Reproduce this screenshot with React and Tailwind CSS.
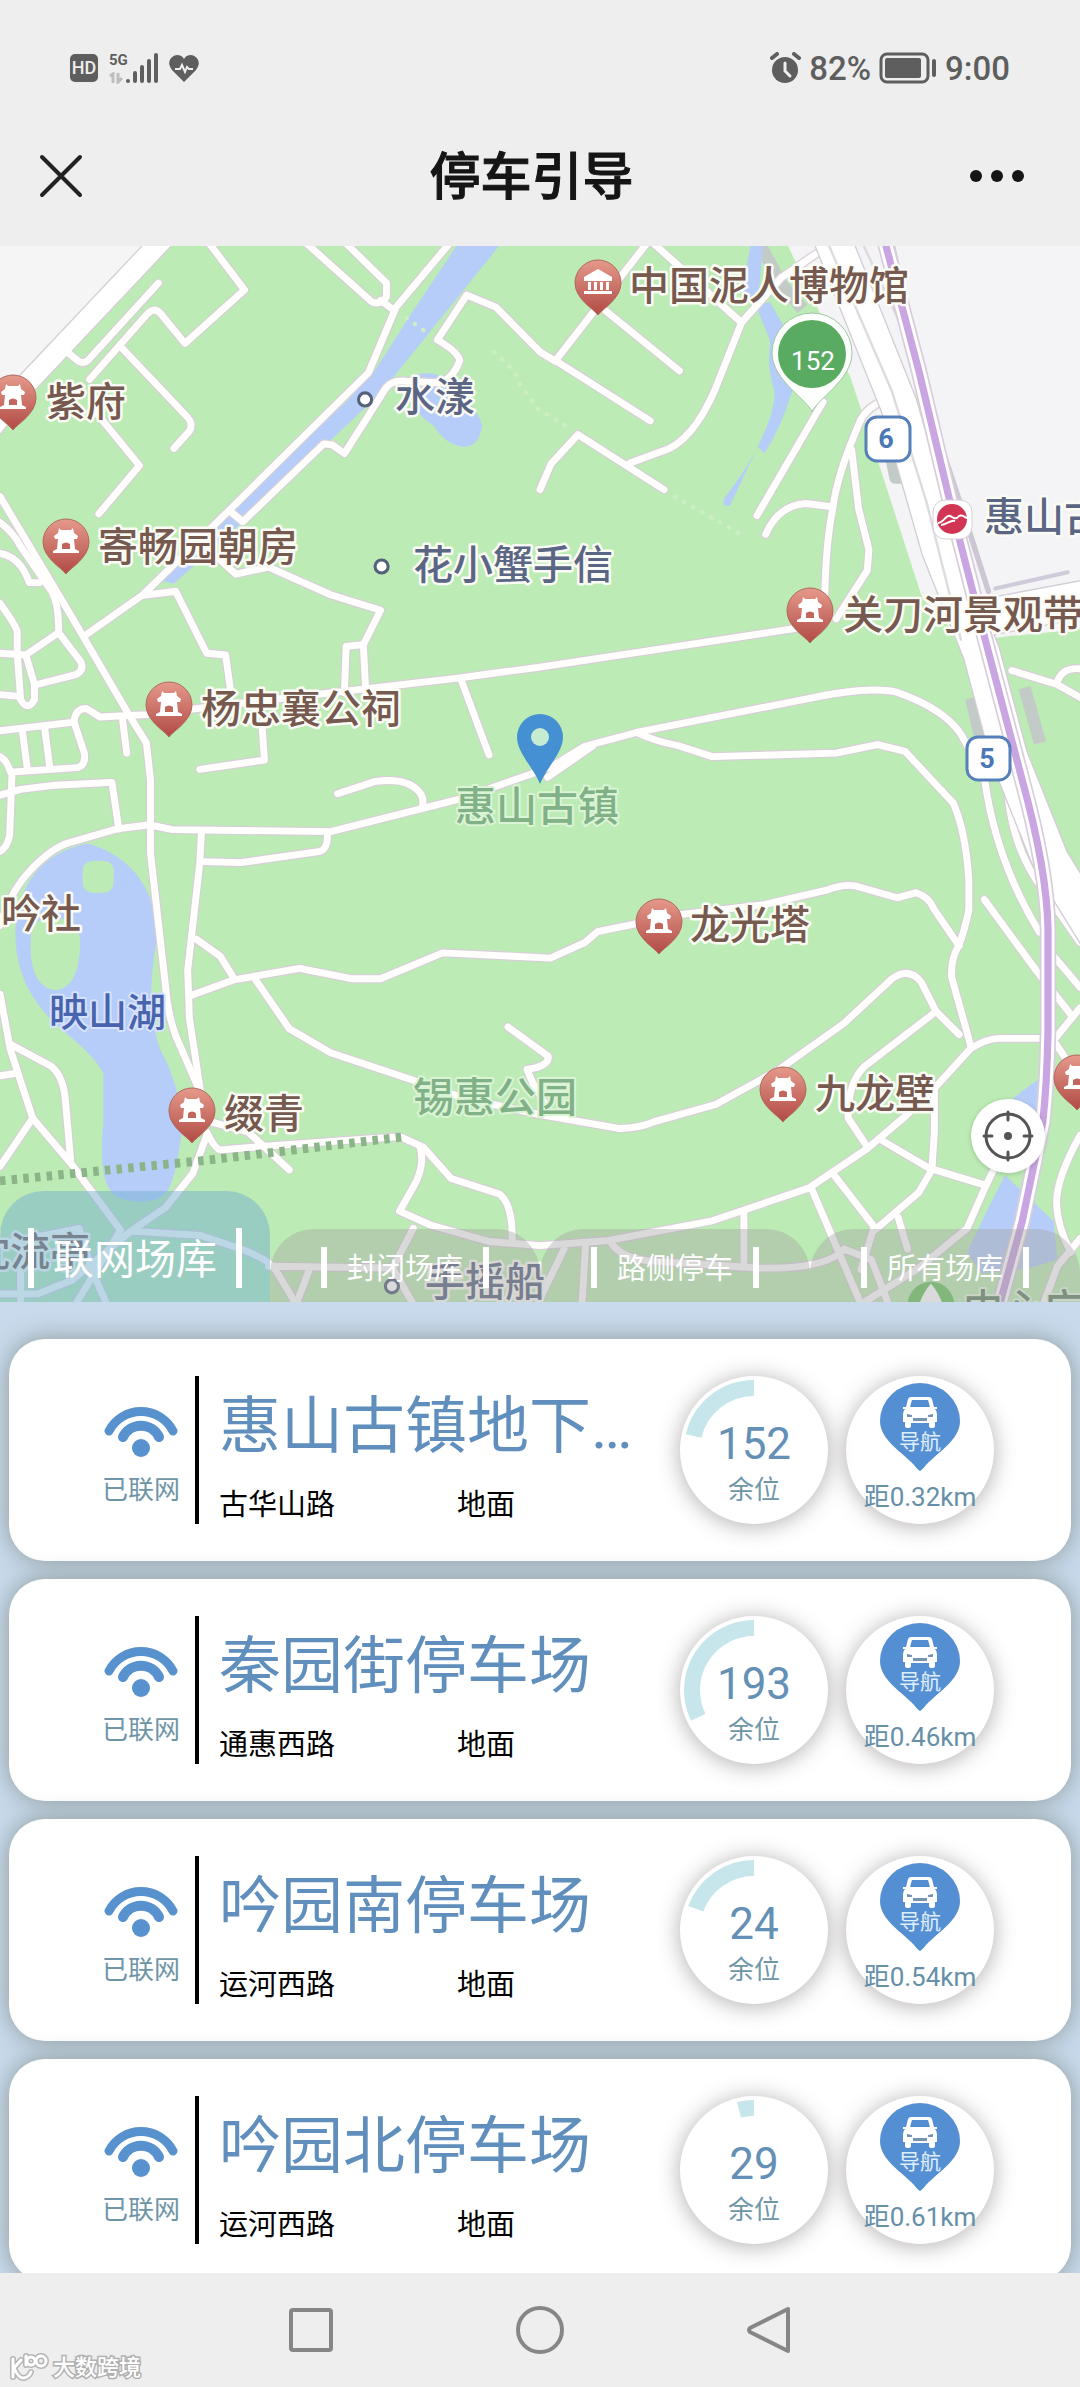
import React from "react";

const lots = [
  { name: "惠山古镇地下…", road: "古华山路", level: "地面", free: 152, distance: "0.32", used: 77 },
  { name: "秦园街停车场", road: "通惠西路", level: "地面", free: 193, distance: "0.46", used: 116 },
  { name: "吟园南停车场", road: "运河西路", level: "地面", free: 24, distance: "0.54", used: 70 },
  { name: "吟园北停车场", road: "运河西路", level: "地面", free: 29, distance: "0.61", used: 14 },
];

const roads = [
  "M600 0L710 145L537 300L465 212Q450 195 430 212L260 405",
  "M460 125L255 350Q240 362 225 350L195 325",
  "M355 315L545 515Q562 535 550 555L505 605",
  "M270 490L405 655L287 795",
  "M0 745L200 1080L375 1380L425 1460L437 1568V1780L480 2160Q485 2240 510 2310L575 2460",
  "M1305 10L1150 195L1070 385L660 790L415 1030L245 1150",
  "M665 785L705 818L940 592L965 595L1000 620L1070 510L1120 430Q1140 405 1180 410L1280 415Q1320 395 1335 350Q1330 325 1270 290L1355 160L1440 195L1568 325L1613 352",
  "M890 10L1080 180Q1105 190 1122 165V125L1005 10",
  "M1105 175L1145 205",
  "M0 820Q40 850 60 890L150 1020Q172 1060 170 1140L75 1205L100 1290V1335Q80 1370 60 1335L50 1200V1135Q40 1110 0 1055",
  "M0 910Q60 920 85 995L115 995",
  "M170 1140L235 1225Q245 1250 220 1262L110 1290",
  "M0 1200L75 1205",
  "M0 1320L55 1325",
  "M415 1032L510 1020L600 1200L655 1205L670 1310",
  "M640 930L685 970L780 950L960 1030L1105 1075L1055 1175L1005 1180L1000 1315M1055 1175L1062 1310",
  "M0 1425L215 1400Q218 1360 250 1360L290 1385L425 1378L700 1345L1330 1272L1568 1240L1900 1190L2330 1125",
  "M1340 1280L1420 1495",
  "M760 1400L768 1510L580 1537",
  "M355 1385L368 1490",
  "M215 1400L245 1490Q250 1525 225 1532L30 1545Q20 1510 0 1500M65 1425L80 1540M130 1420L145 1535M35 1545L28 1730Q20 1765 0 1775",
  "M0 1612L60 1595L160 1583L325 1575L345 1710",
  "M0 1990Q30 1890 90 1828Q150 1765 200 1750L340 1710L435 1698L500 1712L960 1718L1340 1622L1600 1530L1698 1470L1848 1430L2340 1333Q2520 1295 2600 1312Q2740 1360 2790 1435L2810 1470",
  "M1590 1560L1720 1470",
  "M1848 1430Q1900 1455 1968 1468L2068 1500L2428 1490L2548 1465L2628 1485L2768 1635Q2805 1720 2813 1860L2813 1945Q2800 2010 2783 2050Q2760 2090 2763 2140L2820 2345",
  "M980 1608L1090 1572Q1180 1560 1215 1600Q1235 1620 1225 1648",
  "M585 1718L580 1810L545 2120L550 2260L582 2470",
  "M585 1805L700 1808L930 1775Q955 1765 950 1718",
  "M570 2030L640 2080L680 2145",
  "M550 2195L680 2148L870 2115L1020 2145H1105L1285 2070L1598 2085L1698 2040L1735 2008L1980 1958L2218 1930L2400 1888Q2460 1865 2500 1880L2605 1910L2660 1895Q2700 1910 2710 1940L2785 2050",
  "M740 2145L840 2290L960 2360L1200 2440L1340 2490L1560 2538L1800 2580Q1860 2578 1900 2560L2078 2510L2260 2410L2450 2275L2590 2145Q2640 2110 2675 2155L2718 2240L2785 2307",
  "M1475 2285L1592 2370Q1595 2400 1530 2408L1548 2450L1590 2520",
  "M0 2190L30 2350L95 2550L205 2680L350 2875",
  "M30 2335L150 2400Q185 2430 190 2500L205 2670",
  "M0 2427L45 2420M95 2550L0 2690",
  "M610 2560L720 2590L840 2700M600 2590Q625 2640 640 2642L760 2632L1150 2604",
  "M600 2600L560 2710L480 2810L380 2878L580 2890L700 2930Q780 2960 800 2990L860 3090",
  "M350 2875L220 3090M0 2915L130 2890L230 2870L270 3000L310 3090",
  "M0 3060L110 3060L210 3020L380 2878M60 2900L60 3090",
  "M1165 2605L1230 2635L1310 2725L1450 2770Q1490 2800 1487 2910",
  "M1220 2635Q1235 2690 1200 2750L1160 2820L1250 2860L1420 2908L1568 2920L1768 2905L2068 2848L2348 2753L2518 2638L2628 2545L2718 2458L2818 2348Q2860 2320 2900 2318H3020L3060 2323L3136 2230",
  "M780 2980L1140 2985L1200 2870M900 2985L860 3090M1140 2985L1200 3090",
  "M2718 2240L2510 2400Q2460 2450 2463 2550L2513 2625",
  "M2713 2460V2590L2706 2700L2668 2765L2540 2875",
  "M2553 2610L2698 2695L2863 2745L2890 2690",
  "M2863 2745L2808 2870L2668 2985L2500 3090",
  "M2418 2710L2538 2865L2500 2990M2358 2758L2500 3090M2160 2828V2965M2608 2838L2635 2930",
  "M1770 2905Q1800 2960 1900 2965L2200 2985Q2400 2990 2450 2930L2530 2960L2580 3090",
  "M1638 2930L1560 3090M1700 2920L1690 3090M3136 2900L3070 2980L3030 3090",
  "M3136 2600Q3070 2720 3068 2790Q3068 2860 3110 2940",
  "M1878 10L1613 350L1888 525M1758 205L1973 380M1898 10L2153 240",
  "M2370 40L2268 110L2153 240L2078 430Q2010 590 1918 615L1828 648",
  "M1568 725L1600 650L1678 565L1928 725",
  "M2390 470L2198 800",
  "M2568 465Q2520 485 2500 520Q2430 680 2418 780Q2398 880 2395 1030",
  "M2223 855Q2260 770 2340 765L2418 775",
  "M2473 610L2493 780L2523 900L2518 960L2428 1100",
  "M2938 1250L3068 1290L3136 1328M3068 1290Q3080 1240 3136 1245",
  "M2858 1560Q2890 1800 3018 2010M2923 1560Q2930 1740 3010 1860L3136 2040",
  "M2858 1915L3008 2120L3110 2250M3060 2080L3136 2170M3050 2310L3110 2400",
];

const pins = [
  [13, 152], [66, 296], [169, 459], [810, 365], [659, 676], [192, 865], [783, 844], [1077, 832],
];

const sights = [
  ["紫府", 46, 170], ["寄畅园朝房", 98, 315], ["杨忠襄公祠", 201, 477], ["中国泥人博物馆", 629, 54],
  ["关刀河景观带", 843, 383], ["龙光塔", 690, 693], ["吟社", 1, 682], ["缀青", 224, 882],
  ["九龙壁", 815, 862], ["枕流亭", -30, 1020],
];

const places = [
  ["水漾", 395, 165], ["花小蟹手信", 413, 333], ["惠山古镇", 984, 285], ["手摇船", 425, 1050],
];

function Pin({ x, y, children }) {
  return (
    <g transform={`translate(${x} ${y})`}>
      <path d="M0 32C-4 26 -23 16 -23 0A23 23 0 1 1 23 0C23 16 4 26 0 32Z" fill="url(#pin)" stroke="#b0685f" strokeWidth="1" />
      {children}
    </g>
  );
}

function Temple() {
  return (
    <g fill="#fff">
      <path d="M-7 -14L-5 -12H5L7 -14L8 -9L12 -6L11 -3H-11L-12 -6L-8 -9Z" />
      <path d="M-8 -3H8L9 7L13 9V11H-13V9L-9 7Z" />
      <path d="M-4 7V2Q0 -1 4 2V7Z" fill="#c0665c" />
    </g>
  );
}

function ParkMap() {
  return (
    <svg viewBox="0 0 1080 1056" preserveAspectRatio="xMidYMid slice" className="block h-full w-full" role="img" aria-label="惠山古镇地图">
      <defs>
        <linearGradient id="pin" x1="0" y1="0" x2="0" y2="1">
          <stop offset="0" stopColor="#e59a8b" />
          <stop offset="1" stopColor="#b14a44" />
        </linearGradient>
      </defs>
      <rect width="1080" height="1056" fill="#bdebb5" />
      <g transform="translate(0 -6) scale(.3444)" fill="none" strokeLinecap="round" strokeLinejoin="round">
        <path d="M0 0H450L80 390L0 470Z" fill="#f5f5f6" />
        <path d="M2280 0L2470 400L2568 700L2678 1040L2800 1170L2930 1150L3136 1130V0Z" fill="#f4f4f6" />
        <path d="M2200 0L2270 130L2330 200M2590 640L2600 690H2640M2820 1330L2850 1460M2975 1300L3020 1460" stroke="#c3cbc9" strokeWidth="36" strokeLinecap="butt" />
        <g fill="#b7cdf9">
          <path d="M1330 10L1190 220L1085 385L1010 465L600 850L470 990L505 998L720 805L940 600L1100 450L1250 265L1455 10Z" />
          <path d="M1180 400Q1260 370 1300 410Q1390 490 1400 540Q1390 605 1340 600Q1290 590 1260 540Q1180 490 1180 400Z" />
          <path d="M2180 10L2155 150L2200 200L2240 300L2240 400L2260 440Q2240 520 2200 600L2120 770Q2095 780 2103 750Q2220 600 2255 460Q2220 360 2240 290L2200 200L2215 10Z" />
          <path d="M2195 190L2235 180L2300 290V440Q2270 540 2220 620L2200 600Q2250 510 2250 430L2235 380V290Z" />
          <path d="M255 1752C390 1790 460 1900 455 2030C435 2150 430 2250 465 2350C520 2450 540 2560 520 2640C500 2770 480 2792 400 2792C310 2790 285 2740 300 2560L300 2420C250 2320 110 2280 60 2120C20 1990 50 1790 255 1752Z" />
          <path d="M2940 2495Q2990 2450 3030 2430V2580L2980 2600ZM2918 2715L3060 2850L3070 2960Q2960 3000 2850 3000L2808 2940L2860 2830Z" />
        </g>
        <rect x="240" y="1803" width="90" height="92" rx="28" fill="#bdebb5" />
        <path d="M90 2020Q95 1960 170 1970Q240 1975 232 2060Q225 2178 155 2178Q80 2160 90 2020Z" fill="#bdebb5" />
        <g stroke="#d6cfd6" strokeWidth="27">
          {roads.map((d, i) => <path key={i} d={d} />)}
        </g>
        <path d="M490 -20L70 425L-20 540" stroke="#d6cfd6" strokeWidth="66" />
        <g stroke="#fffefd" strokeWidth="20">
          {roads.map((d, i) => <path key={i} d={d} />)}
        </g>
        <path d="M490 -20L70 425L-20 540" stroke="#fff" strokeWidth="58" />
        <g stroke="#d3ced6" strokeWidth="112">
          <path d="M2410 -20L2610 480L2730 900L2850 1200L2930 1500" />
          <path d="M2930 1500L3050 1800L3180 2010M2840 1100L3160 1040" />
        </g>
        <g stroke="#fff" strokeWidth="104">
          <path d="M2410 -20L2610 480L2730 900L2850 1200L2930 1500" />
          <path d="M2930 1500L3050 1800L3180 2010M2840 1100L3160 1040" />
        </g>
        <path d="M2400 0L2590 440L2690 760L2790 1160M2500 0L2640 300L2730 620L2830 960" stroke="#dedae0" strokeWidth="7" />
        <path d="M2590 10L2700 500L2800 800L2870 1020" stroke="#cdc7d3" strokeWidth="16" />
        <path d="M2568 0L2668 380L2768 800L2858 1150L2968 1568Q3040 1830 3043 2000V2300Q3040 2450 3028 2560L2968 2850L2900 3100" stroke="#d8cddc" strokeWidth="48" />
        <path d="M2568 0L2668 380L2768 800L2858 1150L2968 1568Q3040 1830 3043 2000V2300Q3040 2450 3028 2560L2968 2850L2900 3100" stroke="#fff" strokeWidth="38" />
        <path d="M2568 0L2668 380L2768 800L2858 1150L2968 1568Q3040 1830 3043 2000V2300Q3040 2450 3028 2560L2968 2850L2900 3100" stroke="#c9a5e2" strokeWidth="21" />
        <path d="M2890 1012L3100 965" stroke="#d0cbdb" strokeWidth="12" />
        <path d="M0 2732L600 2672L1165 2605" stroke="#8bb588" strokeWidth="26" strokeDasharray="16 18" strokeLinecap="butt" />
        <path d="M1435 325Q1500 380 1510 420L1560 490L1660 550M1960 745L2160 860M1180 225L1240 270" stroke="#cdeec5" strokeWidth="12" strokeDasharray="2 28" />
        <g fill="#fff" stroke="#53617a" strokeWidth="9">
          <circle cx="1060" cy="463" r="19" />
          <circle cx="1108" cy="948" r="19" />
          <circle cx="1138" cy="3038" r="19" />
        </g>
        <circle cx="2703" cy="3093" r="68" fill="#6cc562" />
        <path d="M2703 3030C2670 3070 2665 3100 2665 3130H2741C2741 3100 2736 3070 2703 3030Z" fill="#fff" />
      </g>

      <g fontFamily="Roboto, 'Noto Sans CJK SC', sans-serif" fontWeight="500" paintOrder="stroke" strokeLinejoin="round">
        <g fontSize="40" stroke="#fbfbf5" strokeWidth="5" fill="#76594f">
          {sights.map(([t, x, y]) => <text key={t} x={x} y={y}>{t}</text>)}
        </g>
        <g fontSize="40" stroke="#fbfbf5" strokeWidth="5" fill="#5b6684">
          {places.map(([t, x, y]) => <text key={t} x={x} y={y}>{t}</text>)}
        </g>
        <g fontSize="41" stroke="#dcf4d6" strokeWidth="4" fill="#81b186">
          <text x="455" y="575">惠山古镇</text>
          <text x="413" y="866">锡惠公园</text>
        </g>
        <text x="49" y="780" fontSize="39" stroke="#d6e2fc" strokeWidth="4" fill="#4864ad">映山湖</text>
        <text x="963" y="1077" fontSize="40" stroke="#e5f5e0" strokeWidth="4" fill="#66866a">中心广场</text>
      </g>

      {pins.map(([x, y]) => <Pin key={`${x}-${y}`} x={x} y={y}><Temple /></Pin>)}
      <Pin x={598} y={37}>
        <path d="M-14 -6L0 -14L14 -6V-2H-14ZM-10 -1H-7V7H-10ZM-4 -1H-1V7H-4ZM2 -1H5V7H2ZM8 -1H11V7H8ZM-14 8H14V11H-14Z" fill="#fff" />
      </Pin>

      <g fontFamily="Roboto, sans-serif" fontWeight="700" fontSize="27" textAnchor="middle" fill="#4a78b5">
        <rect x="866" y="171" width="44" height="44" rx="11" fill="#fff" stroke="#5580ba" strokeWidth="3" />
        <text x="886" y="202">6</text>
        <rect x="967" y="491" width="43" height="43" rx="11" fill="#fff" stroke="#5580ba" strokeWidth="3" />
        <text x="987" y="522">5</text>
      </g>

      <rect x="933" y="254" width="39" height="39" rx="12" fill="#fff" stroke="#d6cfd6" />
      <circle cx="952" cy="273" r="15" fill="#d23553" />
      <path d="M938 277C944 277 946 268 950 270C954 272 956 274 959 270C962 268 964 271 967 272M941 279C947 279 951 273 955 275" fill="none" stroke="#fff" strokeWidth="2" />

      <path d="M812 166C808 154 772 134 772 107A40 40 0 1 1 852 107C852 134 816 154 812 166Z" fill="#fcfffb" stroke="#9fc7a0" strokeWidth="1" />
      <circle cx="812" cy="108" r="34" fill="#5aab62" />
      <text x="813" y="124" fontFamily="Roboto, sans-serif" fontSize="26" textAnchor="middle" fill="#fff">152</text>

      <path d="M540 538C534 522 517 507 517 491A23 23 0 1 1 563 491C563 507 546 522 540 538Z" fill="#4490d3" />
      <circle cx="540" cy="491" r="9" fill="#c5ecd0" />
    </svg>
  );
}

function Tab({ label, active }) {
  return active ? (
    <button type="button" role="tab" aria-selected="true" className="flex h-[111px] items-end justify-center rounded-t-[44px] bg-[#78b0cf]/50 pb-[14px]">
      <span className="flex h-[60px] items-center border-x-[6px] border-white px-[19px] pt-1 text-[41px] leading-[60px] whitespace-nowrap text-white">{label}</span>
    </button>
  ) : (
    <button type="button" role="tab" aria-selected="false" className="flex h-[73px] items-end justify-center rounded-t-[44px] bg-[#a3a3a3]/40 pb-[14px]">
      <span className="flex h-[41px] items-center border-x-[6px] border-white px-[20px] pt-1 text-[29px] leading-[41px] whitespace-nowrap text-white">{label}</span>
    </button>
  );
}

function WifiMark() {
  return (
    <svg width="74" height="54" viewBox="0 0 74 54" fill="none" stroke="#5792cf" strokeWidth="9" strokeLinecap="round" aria-hidden="true">
      <path d="M5 28A36 36 0 0 1 69 28" />
      <path d="M19 34A20 20 0 0 1 55 34" strokeWidth="10" />
      <circle cx="37" cy="45" r="9" fill="#5792cf" stroke="none" />
    </svg>
  );
}

function Gauge({ free, used }) {
  const a = (used * Math.PI) / 180;
  const x = 74 - 62 * Math.sin(a);
  const y = 74 - 62 * Math.cos(a);
  return (
    <div className="relative flex size-[148px] shrink-0 flex-col items-center rounded-full bg-white pt-[44px] shadow-[0_2px_22px_rgba(70,60,60,0.42)]">
      <svg viewBox="0 0 148 148" className="absolute inset-0" aria-hidden="true">
        <path d={`M74 12A62 62 0 ${used > 180 ? 1 : 0} 0 ${x} ${y}`} fill="none" stroke="#c6e6eb" strokeWidth="16" />
      </svg>
      <span className="relative text-[44px] leading-[48px] text-[#6490b6]">{free}</span>
      <span className="relative text-[26px] leading-[44px] text-[#6f95a8]">余位</span>
    </div>
  );
}

function Navigate({ distance }) {
  return (
    <button type="button" className="flex size-[148px] shrink-0 flex-col items-center rounded-full bg-white pt-[7px] shadow-[0_2px_22px_rgba(70,60,60,0.42)]">
      <span className="relative flex h-[88px] w-[80px] flex-col items-center pt-[13px]">
        <svg viewBox="0 0 80 88" className="absolute inset-0" aria-hidden="true">
          <path d="M40 88Q38 87 34 82C22 69 0 57 0 38A40 38 0 0 1 80 38C80 57 58 69 46 82Q42 87 40 88Z" fill="#558fd3" />
        </svg>
        <svg width="36" height="32" viewBox="0 0 36 32" className="relative" aria-hidden="true">
          <path d="M9 1H27Q29 1 30 3L32 11H35V13H33Q35 15 35 18V26H33V30Q33 32 31 32H29Q27 32 27 30V27H9V30Q9 32 7 32H5Q3 32 3 30V26H1V18Q1 15 3 13H1V11H4L6 3Q7 1 9 1Z" fill="#fff" />
          <path d="M10 4H26L28 11H8Z" fill="#558fd3" />
          <path d="M5 18L10 19V21H5ZM31 18L26 19V21H31ZM11 22H25V25H11Z" fill="#7593b5" />
        </svg>
        <span className="relative text-[21px] leading-[28px] text-[#e0effc]">导航</span>
      </span>
      <span className="text-[26px] leading-[54px] whitespace-nowrap text-[#668fa8]">距{distance}km</span>
    </button>
  );
}

function LotCard({ lot }) {
  return (
    <li className="flex shrink-0 items-center rounded-[36px] bg-white py-[37px] pr-[77px] shadow-[0_0_24px_rgba(125,135,130,0.8)]">
      <div className="ml-[78px] flex w-[108px] shrink-0 flex-col items-center gap-[14px] pt-[12px]">
        <WifiMark />
        <span className="text-[26px] leading-[38px] text-[#6f95a8]">已联网</span>
      </div>
      <div className="h-[148px] w-1 shrink-0 bg-black" />
      <div className="flex min-w-0 flex-1 flex-col gap-[24px] pt-[10px] pr-[36px] pl-[20px]">
        <h2 className="truncate text-[62px] leading-[76px] text-[#608fbe]">{lot.name}</h2>
        <p className="grid grid-cols-[238px_1fr] text-[29px] leading-[32px] text-black">
          <span>{lot.road}</span>
          <span>{lot.level}</span>
        </p>
      </div>
      <div className="flex gap-[18px]">
        <Gauge free={lot.free} used={lot.used} />
        <Navigate distance={lot.distance} />
      </div>
    </li>
  );
}

function StatusBar() {
  return (
    <div className="flex h-[106px] items-center justify-between pt-[30px] pr-[70px] pl-[70px] text-[#5e5e5e]">
      <div className="flex items-center gap-[11px]">
        <span className="flex h-[28px] w-[28px] items-center justify-center rounded-[5px] bg-[#5e5e5e] text-[18px] leading-none font-medium text-[#eee]">HD</span>
        <div className="flex items-end">
          <div className="flex h-[32px] w-[17px] flex-col">
            <span className="text-[15px] leading-[16px] font-bold">5G</span>
            <svg width="14" height="12" viewBox="0 0 14 12" className="mt-[4px]" fill="none" stroke="#bdbdbd" strokeWidth="3" aria-hidden="true">
              <path d="M1 4L4 2V11M9 1V10L13 6" />
            </svg>
          </div>
          <svg width="32" height="31" viewBox="0 0 32 31" stroke="currentColor" strokeWidth="4" strokeLinecap="round" aria-hidden="true">
            <path d="M2 28V28M9 20V28M16 14V28M23 8V28M30 2V28" />
          </svg>
        </div>
        <svg width="30" height="27" viewBox="0 0 30 27" aria-hidden="true">
          <path d="M15 27L3 15C-4 6 4 0 8 0Q13 0 15 4Q17 0 22 0C26 0 34 6 27 15Z" fill="currentColor" />
          <path d="M6 14H11L13 10L16 17L18 12L20 14H24" fill="none" stroke="#eee" strokeWidth="2" />
        </svg>
      </div>
      <div className="flex items-center gap-[8px] text-[33px] leading-none font-medium">
        <svg width="31" height="32" viewBox="0 0 31 32" aria-hidden="true">
          <circle cx="15" cy="18" r="13" fill="currentColor" />
          <path d="M2 6L7 2M24 2L29 6" stroke="currentColor" strokeWidth="4" strokeLinecap="round" />
          <path d="M15 11V19L20 24" fill="none" stroke="#eee" strokeWidth="3" strokeLinecap="round" />
        </svg>
        <span>82%</span>
        <svg width="58" height="32" viewBox="0 0 58 32" aria-hidden="true">
          <rect x="2" y="2" width="47" height="28" rx="6" fill="none" stroke="currentColor" strokeWidth="3" />
          <rect x="6" y="6" width="36" height="20" rx="2" fill="currentColor" />
          <path d="M55 9V23" stroke="currentColor" strokeWidth="4" strokeLinecap="round" />
        </svg>
        <span>9:00</span>
      </div>
    </div>
  );
}

export default function App() {
  return (
    <div className="flex h-screen flex-col overflow-hidden bg-[#eeeeee] font-['Roboto','Noto_Sans_CJK_SC',sans-serif]">
      <header className="shrink-0">
        <StatusBar />
        <div className="grid h-[140px] grid-cols-[1fr_auto_1fr] items-center pr-[56px] pl-[39px]">
          <button type="button" aria-label="关闭" className="justify-self-start">
            <svg width="44" height="44" viewBox="0 0 44 44" stroke="#222" strokeWidth="4" strokeLinecap="round" aria-hidden="true">
              <path d="M3 3L41 41M41 3L3 41" />
            </svg>
          </button>
          <h1 className="pt-1 text-[51px] leading-[60px] font-medium text-[#151515] [-webkit-text-stroke:1px_#151515]">停车引导</h1>
          <button type="button" aria-label="更多" className="justify-self-end">
            <svg width="54" height="12" viewBox="0 0 54 12" fill="#151515" aria-hidden="true">
              <circle cx="6" cy="6" r="6" />
              <circle cx="27" cy="6" r="6" />
              <circle cx="48" cy="6" r="6" />
            </svg>
          </button>
        </div>
      </header>

      <section className="relative aspect-[1080/1056] w-full shrink-0 overflow-hidden">
        <ParkMap />
        <button type="button" aria-label="定位" className="absolute right-[35px] bottom-[129px] flex size-[74px] items-center justify-center rounded-full bg-white shadow-[0_1px_5px_rgba(0,0,0,0.2)]">
          <svg width="52" height="52" viewBox="0 0 52 52" fill="none" stroke="#555" strokeWidth="3" strokeLinecap="round" aria-hidden="true">
            <circle cx="26" cy="26" r="22" />
            <circle cx="26" cy="26" r="4" fill="#555" stroke="none" />
            <path d="M26 2V10M26 42V50M2 26H10M42 26H50" />
          </svg>
        </button>
        <div role="tablist" className="absolute inset-x-0 bottom-0 grid grid-cols-4 items-end">
          <Tab label="联网场库" active />
          <Tab label="封闭场库" />
          <Tab label="路侧停车" />
          <Tab label="所有场库" />
        </div>
      </section>

      <main className="min-h-0 flex-1 overflow-hidden bg-[#c8daec] px-[9px] pt-[37px]">
        <ul className="flex flex-col gap-[18px]">
          {lots.map((lot) => <LotCard key={lot.name} lot={lot} />)}
        </ul>
      </main>

      <footer className="relative flex h-[114px] shrink-0 items-center justify-center gap-[181px] bg-[#eeeeee]">
        <button type="button" aria-label="最近任务">
          <svg width="48" height="48" viewBox="0 0 48 48" fill="none" stroke="#868686" strokeWidth="4" aria-hidden="true">
            <rect x="4" y="4" width="40" height="40" rx="2" />
          </svg>
        </button>
        <button type="button" aria-label="主页">
          <svg width="48" height="48" viewBox="0 0 48 48" fill="none" stroke="#868686" strokeWidth="4" aria-hidden="true">
            <circle cx="24" cy="24" r="22" />
          </svg>
        </button>
        <button type="button" aria-label="返回">
          <svg width="48" height="48" viewBox="0 0 48 48" fill="none" stroke="#868686" strokeWidth="4" strokeLinejoin="round" aria-hidden="true">
            <path d="M43 3V45L5 26Q3 24 5 22Z" />
          </svg>
        </button>
        <div className="absolute bottom-[4px] left-[9px] flex items-center gap-[4px]">
          <svg width="40" height="30" viewBox="0 0 40 30" fill="none" strokeLinecap="round" aria-hidden="true">
            <g stroke="#b5b5b5" strokeWidth="6">
              <path d="M4 6V24M12 7L5 15Q10 26 15 25Q20 24 22 19M17 3V12" />
              <circle cx="22" cy="8" r="4" />
              <circle cx="32" cy="8" r="5" />
            </g>
            <g stroke="#fff" strokeWidth="3">
              <path d="M4 6V24M12 7L5 15Q10 26 15 25Q20 24 22 19M17 3V12" />
              <circle cx="22" cy="8" r="4" />
              <circle cx="32" cy="8" r="5" />
            </g>
          </svg>
          <span className="text-[22px] leading-[30px] font-medium text-white [-webkit-text-stroke:3px_#b0b0b0] [paint-order:stroke_fill]">大数跨境</span>
        </div>
      </footer>
    </div>
  );
}
